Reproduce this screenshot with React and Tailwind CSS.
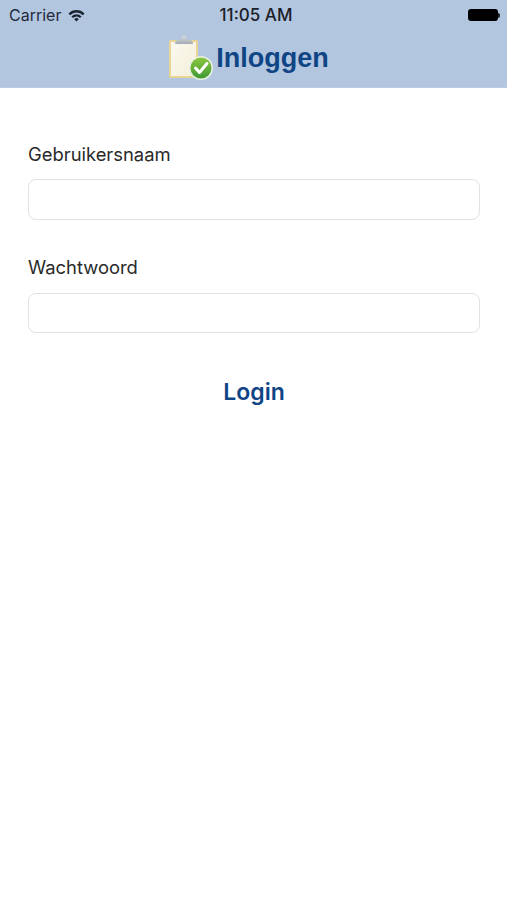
import { useState } from 'react';

function ClipboardIcon() {
  return (
    <svg width="46" height="46" viewBox="0 0 46 46" className="shrink-0">
      <defs>
        <linearGradient id="papier" x1="0" y1="0" x2="1" y2="1">
          <stop offset="0" stopColor="#fbf9ee" />
          <stop offset="1" stopColor="#f3efdb" />
        </linearGradient>
        <linearGradient id="vink" x1="0" y1="0" x2="0" y2="1">
          <stop offset="0" stopColor="#8cc63f" />
          <stop offset="1" stopColor="#3f9a35" />
        </linearGradient>
        <linearGradient id="klem" x1="0" y1="0" x2="0" y2="1">
          <stop offset="0" stopColor="#d8dcdf" />
          <stop offset="1" stopColor="#a4adb5" />
        </linearGradient>
      </defs>
      <rect x="1" y="5" width="29" height="38" rx="1.5" fill="#e8d596" />
      <rect x="3" y="7" width="25" height="34" fill="url(#papier)" />
      <path d="M7 9 Q7 5 11 5 L12.5 5 Q13.5 0.5 16 0.5 Q18.5 0.5 19.5 5 L21 5 Q25 5 25 9 Z" fill="url(#klem)" />
      <circle cx="33" cy="33" r="12" fill="#e9f0e0" />
      <circle cx="33" cy="33" r="10.5" fill="url(#vink)" />
      <path d="M27.5 33 L31.5 37.5 L39 28.5" fill="none" stroke="#fff" strokeWidth="3" strokeLinecap="round" strokeLinejoin="round" />
    </svg>
  );
}

function WifiIcon() {
  return (
    <svg width="17" height="13" viewBox="0 0 17 13">
      <path d="M0.5 4.5 A11 11 0 0 1 16.5 4.5 L14.8 6.2 A8.6 8.6 0 0 0 2.2 6.2 Z" fill="#1b2430" />
      <path d="M3.4 7.4 A7 7 0 0 1 13.6 7.4 L11.9 9 A4.6 4.6 0 0 0 5.1 9 Z" fill="#1b2430" />
      <path d="M6.2 10.2 A3.2 3.2 0 0 1 10.8 10.2 L8.5 12.6 Z" fill="#1b2430" />
    </svg>
  );
}

function StatusBar() {
  return (
    <div className="relative flex h-[30px] items-center justify-between pl-[9px] pr-[7px] text-[#1f2a3c]">
      <div className="flex items-center gap-[7px]">
        <span className="text-[16px] leading-none">Carrier</span>
        <WifiIcon />
      </div>
      <span className="absolute left-[5px] right-0 text-center text-[17px] font-medium leading-none text-[#1a2028]">
        11:05 AM
      </span>
      <div className="flex items-center">
        <div className="h-[12px] w-[30px] rounded-[3px] bg-black" />
        <div className="h-[5px] w-[2px] rounded-r-sm bg-[#222]" />
      </div>
    </div>
  );
}

function Field({ label, value, onChange, type = 'text', inputClass = 'mt-[14px] h-[41px]' }) {
  return (
    <label className="block">
      <span className="block text-[18.4px] leading-[22px] text-[#2a2a2a]">{label}</span>
      <input
        type={type}
        value={value}
        onChange={(e) => onChange(e.target.value)}
        className={`block w-full rounded-[8px] border border-[#e2e2e2] bg-white px-2 outline-none ${inputClass}`}
      />
    </label>
  );
}

export default function App() {
  const [naam, setNaam] = useState('');
  const [wachtwoord, setWachtwoord] = useState('');

  return (
    <div className="h-[900px] w-full bg-white font-['Inter',sans-serif]">
      <header className="h-[88px] border-b border-[#bccbe0] bg-[#b3c6e0]">
        <StatusBar />
        <div className="flex h-[57px] items-start justify-center">
          <div className="mt-[5px] flex items-center gap-[2px] pr-[10px]">
            <ClipboardIcon />
            <h1 className="font-['Liberation_Sans',Arial,sans-serif] text-[27px] font-bold leading-none text-[#0f4585]">
              Inloggen
            </h1>
          </div>
        </div>
      </header>

      <form className="pl-[28px] pr-[27px] pt-[55px]" onSubmit={(e) => e.preventDefault()}>
        <Field label="Gebruikersnaam" value={naam} onChange={setNaam} />
        <div className="mt-[36px]">
          <Field
            label="Wachtwoord"
            type="password"
            value={wachtwoord}
            onChange={setWachtwoord}
            inputClass="mt-[15px] h-[40px]"
          />
        </div>
        <button type="submit" className="mt-[44px] block w-full text-center text-[23px] font-semibold leading-[30px] text-[#0f4585]">
          Login
        </button>
      </form>
    </div>
  );
}
